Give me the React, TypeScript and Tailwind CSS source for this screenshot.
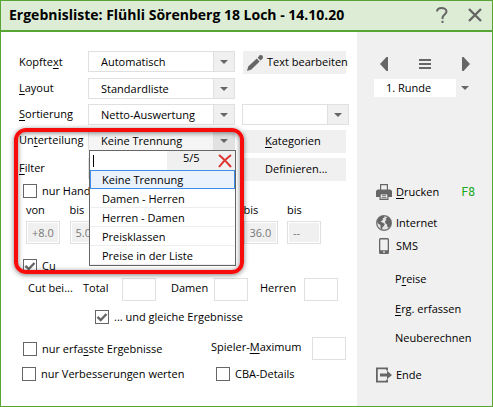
import { useId, useState } from "react"
import type { ReactNode } from "react"
import clsx from "clsx"

interface SelectBoxProps {
    label: string
    value?: string
    id?: string
    open?: boolean
}

interface CheckProps {
    children: ReactNode
    checked?: boolean
    className?: string
}

interface ButtonProps {
    children: ReactNode
    className?: string
}

const divisions = ["Keine Trennung", "Damen - Herren", "Herren - Damen", "Preisklassen", "Preise in der Liste"]

const limits = [
    { label: "von", value: "+8.0" },
    { label: "bis", value: "5.0" },
    { label: "", value: "" },
    { label: "", value: "" },
    { label: "", value: "" },
    { label: "bis", value: "36.0" },
    { label: "bis", value: "--" },
]

// underlined access key
function Key({ children }: { children: ReactNode }) {
    return <span className="underline decoration-1 underline-offset-2">{children}</span>
}

function Caret({ className }: { className?: string }) {
    return (
        <svg viewBox="0 0 8 4" className={clsx("h-1 w-2 fill-[#666]", className)} aria-hidden="true">
            <path d="M0 0h8L4 4z" />
        </svg>
    )
}

function SelectBox({ label, value = "", id, open = false }: SelectBoxProps) {
    return (
        <div className="grid h-[21px] w-full grid-cols-[1fr_21px] border border-[#e0e0e0]">
            <select
                id={id}
                aria-label={label}
                defaultValue={value}
                className={clsx("col-span-2 col-start-1 row-start-1 h-[19px] w-full appearance-none pl-3 leading-[19px] outline-none", open ? "bg-[#f5f5f5]" : "bg-white")}
            >
                <option>{value}</option>
            </select>
            <span className={clsx("pointer-events-none col-start-2 row-start-1 flex items-center justify-center border-l border-[#e0e0e0]", open ? "bg-[#e2e2e2]" : "bg-[#f0f0f0]")}>
                <Caret />
            </span>
        </div>
    )
}

function Check({ children, checked = false, className }: CheckProps) {
    return (
        <label className={clsx("flex items-center gap-[5px] whitespace-nowrap", className)}>
            <span className="grid size-[14px] shrink-0">
                <input type="checkbox" defaultChecked={checked} className="peer col-start-1 row-start-1 size-[14px] appearance-none border border-[#666] bg-white" />
                <svg viewBox="0 0 14 14" className="pointer-events-none invisible col-start-1 row-start-1 size-[14px] fill-none stroke-[#666] stroke-[2.4] peer-checked:visible" aria-hidden="true">
                    <path d="M2.500 6.800l3.200 3.200 5.800-6" />
                </svg>
            </span>
            <span>{children}</span>
        </label>
    )
}

function NumberBox({ label }: { label: string }) {
    return <input aria-label={label} className="h-[23px] w-[34px] shrink-0 border border-[#e0e0e0] bg-white text-center outline-none" />
}

function GreyButton({ children, className }: ButtonProps) {
    return (
        <button type="button" className={clsx("mr-[3px] ml-[1px] flex h-[23px] w-[103px] items-center bg-[#f0f0f0] whitespace-nowrap", className)}>
            {children}
        </button>
    )
}

function SideButton({ children, className }: ButtonProps) {
    return (
        <button type="button" className={clsx("flex h-4 items-center gap-1 text-left whitespace-nowrap", className)}>
            {children}
        </button>
    )
}

function DivisionList() {
    const [selected, setSelected] = useState(divisions[0])

    return (
        <div className="absolute top-[20px] left-[1px] z-10 w-[147px] border border-[#666] bg-white">
            <div className="flex h-[19px] bg-[#f0f0f0]">
                <input aria-label="Suche" className="h-[19px] w-[77px] bg-white outline-none" />
                <span className="-ml-[74px] h-3 w-px self-center bg-black" />
                <span className="ml-[89px] leading-[13px]">5/5</span>
                <button type="button" aria-label="Schliessen" className="ml-auto px-[3px]">
                    <svg viewBox="0 0 14 14" className="size-[14px] fill-none stroke-[#dc3530] stroke-2">
                        <path d="M1 1q5 4 12 12M13 1Q6 6 1 13" />
                    </svg>
                </button>
            </div>
            <ul role="listbox" aria-label="Unterteilung">
                {divisions.map((item) => (
                    <li
                        key={item}
                        role="option"
                        aria-selected={item === selected}
                        onClick={() => setSelected(item)}
                        className={clsx("h-[19px] border pl-[11px] leading-[17px]", item === selected ? "border-[#3c8ee8] bg-[#eaf2fe]" : "border-transparent border-b-[#eee]")}
                    >
                        {item}
                    </li>
                ))}
            </ul>
        </div>
    )
}

function Settings() {
    const id = useId()

    return (
        <main className="relative min-w-0 flex-1 pt-[19px] pr-2 pl-[18px]">
            <div className="grid grid-cols-[69px_147px_1fr] gap-y-[5px]">
                <label htmlFor={id + "head"} className="leading-[22px]">Kopfte<Key>x</Key>t</label>
                <SelectBox id={id + "head"} label="Kopftext" value="Automatisch" />
                <div className="-mb-[2px] pl-[7px]">
                    <GreyButton className="pl-1">
                        <svg viewBox="0 0 16 16" className="size-4 shrink-0 fill-[#666]" aria-hidden="true">
                            <path d="M0 16l1.200-4.600L9.800 3.600l2.800 2.800L4.400 14.600zM10.700 2.800L12 1.600l2.800 2.800-1.300 1.200z" />
                            <circle cx="13.800" cy="2.200" r="2.200" />
                        </svg>
                        <span className="ml-1">Text bearbeiten</span>
                    </GreyButton>
                </div>

                <label htmlFor={id + "layout"} className="leading-[19px]"><Key>L</Key>ayout</label>
                <SelectBox id={id + "layout"} label="Layout" value="Standardliste" />
                <span />

                <label htmlFor={id + "sort"} className="leading-[19px]"><Key>S</Key>ortierung</label>
                <SelectBox id={id + "sort"} label="Sortierung" value="Netto-Auswertung" />
                <div className="pl-[7px]">
                    <SelectBox label="Zweite Sortierung" />
                </div>

                <label htmlFor={id + "div"} className="leading-[19px]">Un<Key>t</Key>erteilung</label>
                <div className="relative">
                    <SelectBox id={id + "div"} label="Unterteilung" value="Keine Trennung" open />
                    <DivisionList />
                </div>
                <div className="pl-[7px]">
                    <GreyButton className="pl-[22px]"><span><Key>K</Key>ategorien</span></GreyButton>
                </div>

                <label htmlFor={id + "filter"} className="leading-[19px]"><Key>F</Key>ilter</label>
                <SelectBox id={id + "filter"} label="Filter" />
                <div className="pl-[7px]">
                    <GreyButton className="pl-[22px]">Definieren...</GreyButton>
                </div>
            </div>

            <Check className="mt-[2px] ml-1 h-4">nur Hand</Check>
            <div className="mt-[2px] ml-[7px] flex w-[295px] justify-between">
                {limits.map((limit, i) => (
                    <label key={i} className="w-[34px]">
                        <span className="block h-5 leading-[18px]">{limit.label}</span>
                        <input disabled defaultValue={limit.value} className="block h-[23px] w-full border border-[#e0e0e0] bg-[#f0f0f0] pl-[5px] leading-[17px] text-[#777] shadow-[inset_0_0_0_1px_#fff]" />
                    </label>
                ))}
            </div>
            <Check checked className="mt-[14px] ml-1 h-4">Cu</Check>

            <div className="mt-1 ml-[9px] flex h-[23px] items-start whitespace-nowrap">
                <span className="w-[55px] leading-[19px]">Cut bei...</span>
                <span className="w-[39px] leading-[19px]">Total</span>
                <NumberBox label="Total" />
                <span className="ml-[15px] w-[43px] leading-[19px]">Damen</span>
                <NumberBox label="Damen" />
                <span className="ml-3 w-11 leading-[19px]">Herren</span>
                <NumberBox label="Herren" />
            </div>
            <Check checked className="mt-2 ml-[76px] h-4">... und gleiche Ergebnisse</Check>

            <div className="mt-3 flex h-[23px] items-start">
                <Check className="mt-1 ml-1 h-4 w-[188px]">nur erfa<Key>s</Key>ste Ergebnisse</Check>
                <label htmlFor={id + "max"} className="w-[101px] leading-[19px] whitespace-nowrap">Spieler-<Key>M</Key>aximum</label>
                <input id={id + "max"} className="h-[23px] w-[34px] border border-[#e0e0e0] bg-white text-center outline-none" />
            </div>
            <div className="mt-[6px] ml-[3px] flex">
                <Check className="h-4 w-[194px]">nur Verbesserungen werten</Check>
                <Check className="h-4">CBA-Details</Check>
            </div>

            {/* highlight around the subdivision field */}
            <div className="pointer-events-none absolute top-[96px] left-[13px] z-20 h-[146px] w-[230px] rounded-xl border-4 border-[#f80b0b] shadow-[0_1px_5px_rgba(0,0,0,0.5),inset_0_1px_5px_rgba(0,0,0,0.5)]" />
        </main>
    )
}

function Sidebar() {
    return (
        <aside className="w-[135px] shrink-0 bg-[#f0f0f0] pl-[19px]">
            <div className="mt-[25px] flex h-[14px] w-[94px] items-center justify-between pl-1">
                <button type="button" aria-label="Zurück">
                    <svg viewBox="0 0 8 14" className="h-[14px] w-2 fill-[#666]"><path d="M6.500 0H8v14H6.500L0 7z" /></svg>
                </button>
                <button type="button" aria-label="Liste">
                    <svg viewBox="0 0 12 10" className="h-[10px] w-3 fill-[#666]"><path d="M0 0h12v2H0zM0 4h12v2H0zM0 8h12v2H0z" /></svg>
                </button>
                <button type="button" aria-label="Weiter">
                    <svg viewBox="0 0 8 14" className="h-[14px] w-2 fill-[#666]"><path d="M0 0h1.500L8 7l-6.500 7H0z" /></svg>
                </button>
            </div>
            <div className="mt-2 -ml-[2px] flex h-[18px] items-center">
                <select aria-label="Runde" className="h-[18px] w-[82px] appearance-none bg-white pl-3 outline-none">
                    <option>1. Runde</option>
                </select>
                <Caret className="ml-[5px]" />
            </div>

            <SideButton className="mt-[87px] w-[102px]">
                <svg viewBox="0 0 16 16" className="size-4 fill-[#666]" aria-hidden="true">
                    <path fillRule="evenodd" d="M4 0h8v5.500h2.500L16 7v6h-3.500v3h-9v-3H0V7l1.500-1.500H4zM5.200 1.200v4.300h5.600V1.200zM4.700 10.500v4.300h6.600v-4.300z" />
                    <path d="M6 11.300h4v1H6zM5.500 13.200h5v1h-5z" />
                </svg>
                <span><Key>D</Key>rucken</span>
                <span className="ml-auto pr-[3px] font-['Roboto',sans-serif] text-[12px] text-[#1ba81b]">F8</span>
            </SideButton>
            <SideButton className="mt-[15px]">
                <svg viewBox="0 0 16 16" className="size-4" aria-hidden="true">
                    <circle cx="8" cy="8" r="7.300" className="fill-[#e4e4e4] stroke-[#777] stroke-[1.4]" />
                    <path className="fill-[#666]" d="M1 6l2-3.600 3-1.600 2 .2.500 1.500-1.800.8.300 1.200L5.500 6l-1 .8 2 .6 2.300 1.600-1 2-1.300 1.200-.4 2.800L4.500 13V10L2 8.500zM9.500 3.500L12 2l2.500 2.500.8 3-.3 2.500-2 2.700-1.500-.7-.6-2.800L9.500 8.500 9 6l1.600-1z" />
                </svg>
                <span>Internet</span>
            </SideButton>
            <SideButton className="mt-[7px]">
                <svg viewBox="0 0 16 16" className="size-4 fill-[#666]" aria-hidden="true">
                    <path fillRule="evenodd" d="M4.500 0h7Q13 0 13 1.500v13q0 1.500-1.500 1.500h-7Q3 16 3 14.500v-13Q3 0 4.500 0zM4.300 1.600v10.600h7.400V1.600zM7.200 13.300v1.400h1.600v-1.400z" />
                </svg>
                <span>SMS</span>
            </SideButton>
            <SideButton className="mt-[17px] ml-[19px]"><span>P<Key>r</Key>eise</span></SideButton>
            <SideButton className="mt-[14px] ml-[19px]"><span><Key>E</Key>rg. erfassen</span></SideButton>
            <SideButton className="mt-[13px] ml-[19px]">Neuberechnen</SideButton>
            <SideButton className="mt-[21px]">
                <svg viewBox="0 0 16 16" className="size-4 fill-[#666]" aria-hidden="true">
                    <path d="M0 .5h12v3h-1.800V2.300H1.800v11.400h8.400v-1.200H12v3H0z" />
                    <path d="M4 6.500h7V3.800L16 8l-5 4.200V9.500H4z" />
                </svg>
                <span>Ende</span>
            </SideButton>
        </aside>
    )
}

export default function App() {
    return (
        <div className="flex min-h-screen flex-col border border-[#57a635] bg-white font-['Open_Sans','Noto_Sans',sans-serif] text-[11px] text-black">
            <header className="flex h-[31px] items-center border-b-2 border-[#57a635] bg-[#ddecd5] pr-[10px] pb-[2px] pl-2">
                <h1 className="flex-1 text-[14px] leading-5 font-bold whitespace-nowrap">Ergebnisliste: Flühli Sörenberg 18 Loch - 14.10.20</h1>
                <button type="button" aria-label="Hilfe">
                    <svg viewBox="0 0 12 16" className="h-4 w-3 fill-none stroke-[#666] stroke-2">
                        <path d="M1 4.500C1 2.200 3 1 5.500 1S10.500 2.200 10.500 4.500C10.500 7.500 6.500 7.500 6.500 11V12M6.500 13.800V16" />
                    </svg>
                </button>
                <button type="button" aria-label="Fenster schliessen" className="ml-5">
                    <svg viewBox="0 0 14 14" className="size-[14px] fill-none stroke-[#666] stroke-[2.4]">
                        <path d="M1 1l12 12M13 1L1 13" />
                    </svg>
                </button>
            </header>
            <div className="flex flex-1">
                <Settings />
                <Sidebar />
            </div>
        </div>
    )
}
